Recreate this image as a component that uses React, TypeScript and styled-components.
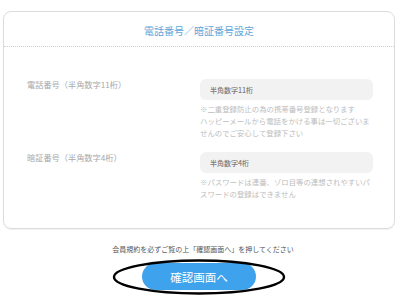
import React, { FC } from 'react';
import styled, { createGlobalStyle } from 'styled-components';

const GlobalStyle = createGlobalStyle`
  html, body {
    margin: 0;
    padding: 0;
    background: #fff;
  }
  body {
    font-family: "Noto Sans CJK JP", "Noto Sans", sans-serif;
    width: 400px;
    height: 295px;
    overflow: hidden;
  }
`;

type Field = {
  label: string;
  placeholder: string;
  notes: string[];
};

const fields: Field[] = [
  {
    label: '電話番号（半角数字11桁）',
    placeholder: '半角数字11桁',
    notes: [
      '※二重登録防止の為の携帯番号登録となります',
      'ハッピーメールから電話をかける事は一切ございま',
      'せんのでご安心して登録下さい',
    ],
  },
  {
    label: '暗証番号（半角数字4桁）',
    placeholder: '半角数字4桁',
    notes: ['※パスワードは連番、ゾロ目等の連想されやすいパ', 'スワードの登録はできません'],
  },
];

const App: FC = () => {
  return (
    <>
      <GlobalStyle />
      <Page>
        <Card>
          <CardHeader>電話番号／暗証番号設定</CardHeader>
          <CardBody>
            {fields.map((f) => (
              <Row key={f.label}>
                <Label>{f.label}</Label>
                <FieldCol>
                  <Input placeholder={f.placeholder} />
                  <Notes>
                    {f.notes.map((n) => (
                      <div key={n}>{n}</div>
                    ))}
                  </Notes>
                </FieldCol>
              </Row>
            ))}
          </CardBody>
        </Card>
        <Footer>
          <Agree>会員規約を必ずご覧の上「確認画面へ」を押してください</Agree>
          <ButtonWrap>
            <Submit type="button">確認画面へ</Submit>
            <Circle viewBox="0 0 176 38" width="176" height="38">
              <ellipse cx="88" cy="19" rx="85" ry="16.5" fill="none" stroke="#000" strokeWidth="2.4" />
            </Circle>
          </ButtonWrap>
        </Footer>
      </Page>
    </>
  );
};

export default App;

const Page = styled.div`
  padding: 11px 5px 0 3px;
`;

const Card = styled.div`
  box-sizing: border-box;
  width: 392px;
  height: 218px;
  border: 1px solid #dcdcdc;
  border-radius: 8px;
  box-shadow: 0 1px 1px rgba(0, 0, 0, 0.06);
  display: flex;
  flex-direction: column;
`;

const CardHeader = styled.div`
  height: 35px;
  display: flex;
  align-items: center;
  justify-content: center;
  color: #5ba7d9;
  font-size: 10px;
  border-bottom: 1px dotted #cfcfcf;
  padding-top: 2px;
  box-sizing: border-box;
`;

const CardBody = styled.div`
  padding: 32px 22px 0 23px;
  display: flex;
  flex-direction: column;
  gap: 13px;
`;

const Row = styled.div`
  display: grid;
  grid-template-columns: 173px 173px;
  align-items: start;
`;

const Label = styled.div`
  font-size: 8.2px;
  line-height: 10px;
  color: #a8a8a8;
`;

const FieldCol = styled.div`
  display: flex;
  flex-direction: column;
`;

const Input = styled.input`
  box-sizing: border-box;
  width: 173px;
  height: 21px;
  border: none;
  border-radius: 6px;
  background: #f2f2f2;
  padding: 0 10px;
  font-family: inherit;
  font-size: 7px;
  font-weight: 500;
  outline: none;
  &::placeholder {
    color: #7a7a7a;
  }
`;

const Notes = styled.div`
  margin-top: 3px;
  font-size: 7.4px;
  line-height: 12px;
  color: #bdbdbd;
  white-space: nowrap;
`;

const Footer = styled.div`
  display: flex;
  flex-direction: column;
  align-items: center;
  padding-top: 15px;
  padding-left: 8px;
`;

const Agree = styled.div`
  font-size: 7px;
  line-height: 10px;
  color: #555;
`;

const ButtonWrap = styled.div`
  position: relative;
  margin-top: 9px;
  margin-left: -8px;
`;

const Submit = styled.button`
  display: block;
  width: 114px;
  height: 27px;
  border: none;
  border-radius: 14px;
  background: #3fa2ec;
  color: #fff;
  font-family: "Noto Sans CJK JP", serif;
  font-size: 11.5px;
  font-weight: 400;
  cursor: pointer;
`;

const Circle = styled.svg`
  position: absolute;
  left: 50%;
  top: 50%;
  transform: translate(-50%, -50%);
  pointer-events: none;
  overflow: visible;
`;
